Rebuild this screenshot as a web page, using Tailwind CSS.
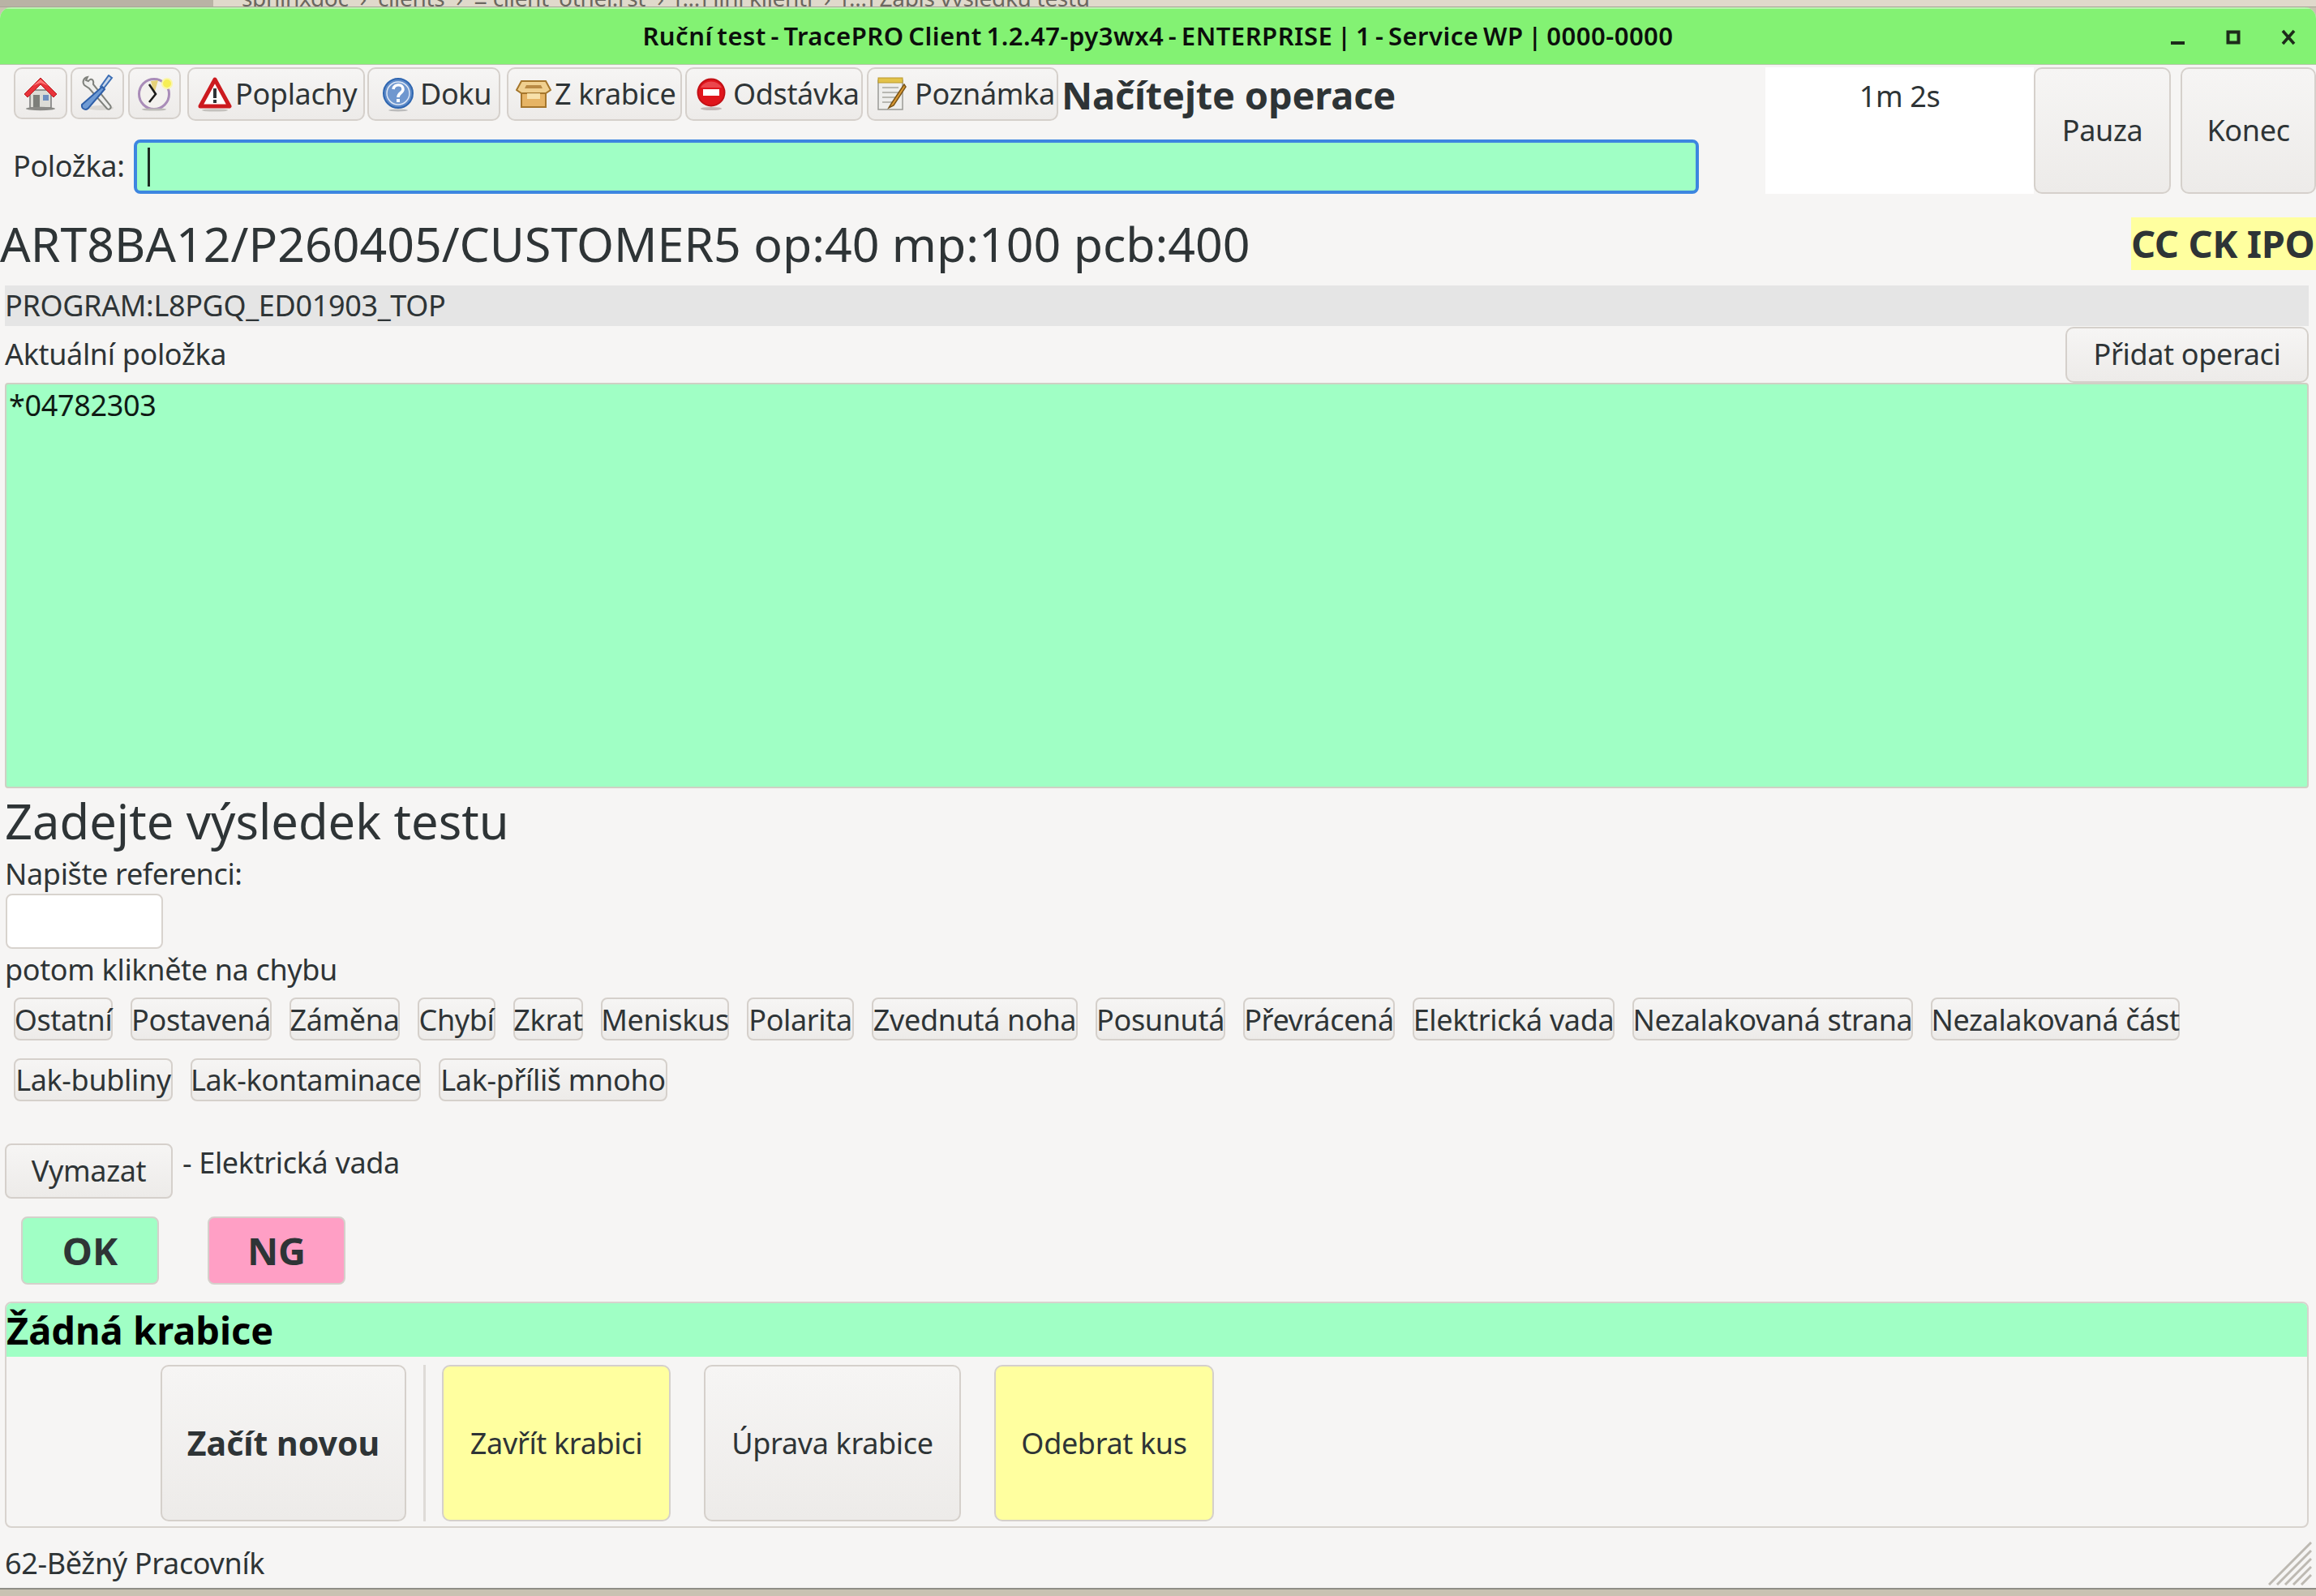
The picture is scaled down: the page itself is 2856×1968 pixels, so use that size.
<!DOCTYPE html>
<html lang="cs">
<head>
<meta charset="utf-8">
<script src="https://cdn.jsdelivr.net/npm/@tailwindcss/browser@4"></script>
<title>Ruční test</title>
</head>
<body class="m-0 p-0">
<div class="relative w-[2856px] h-[1968px] overflow-hidden flex flex-col bg-[#c9c2b2] font-['Noto_Sans',sans-serif] text-[#2e3436] text-[36px] leading-[50px] tracking-[-0.35px]">
  <!-- desktop strip behind the window -->
  <div class="h-[9px] shrink-0 flex overflow-hidden bg-[#e0d9cb] text-[#6b675f] text-[28px] tracking-[-0.3px] border-b border-[#a9a598]">
    <div class="w-[263px] h-full bg-[#b9b3a5] shrink-0"></div>
    <div class="pl-[35px] -mt-[27px] whitespace-pre leading-[48px]">sphinxdoc  ›  clients  ›  ≡ client_other.rst  ›  [...] Jiní klienti  ›  [...] Zápis výsledku testu</div>
  </div>

  <!-- window -->
  <div class="h-[949px] grow flex flex-col bg-[#f6f5f4] rounded-t-[14px] overflow-hidden">
    <!-- title bar -->
    <div class="relative h-[71px] shrink-0 flex items-center justify-center bg-[#83f273] border-t-2 border-[#b9f5ae] border-b border-b-[#b5c9a8] text-[#0c0f0c] font-semibold text-[31px]">
      <span class="pb-[2px] w-[1274px] text-center whitespace-nowrap tracking-[0.5px] [word-spacing:-3px]">Ruční test - TracePRO Client 1.2.47-py3wx4 - ENTERPRISE | 1 - Service WP | 0000-0000</span>
      <div class="absolute right-[25px] top-[25px] flex items-start gap-[50px]">
        <svg width="18" height="20" viewBox="0 0 18 20"><rect x="0" y="15" width="17" height="4" fill="#1d2b1a"/></svg>
        <svg width="18" height="20" viewBox="0 0 18 20"><rect x="2.5" y="3.5" width="13" height="13" fill="none" stroke="#1d2b1a" stroke-width="4"/></svg>
        <svg width="18" height="20" viewBox="0 0 18 20"><path d="M2 2 L16 18 M16 2 L2 18" fill="none" stroke="#1d2b1a" stroke-width="3.6"/></svg>
      </div>
    </div>

    <!-- header: toolbar + input, timer, pause, end -->
    <div class="h-[156px] mt-[3px] shrink-0 flex">
      <div class="w-[2177px] shrink-0 flex flex-col">
        <div class="h-[66px] pl-[17px] flex items-start">
          <button class="w-[66px] h-[64px] mr-[4px] shrink-0 flex items-center justify-center rounded-[10px] border-2 border-[#d5d0cb] bg-linear-to-b from-[#f6f5f4] to-[#edebe9]">
            <svg width="42" height="44" viewBox="0 0 42 44"><rect x="8" y="18" width="26" height="22" fill="#dcdcd6" stroke="#777" stroke-width="1.5"/><rect x="12" y="24" width="8" height="16" fill="#7d7f7a"/><rect x="24" y="24" width="7" height="7" fill="#6f8fc0"/><path d="M1 23 L21 3 L41 23 L37 27 L21 11 L5 27 Z" fill="#e8333a" stroke="#b81f24" stroke-width="1"/><path d="M11 13 L21 5 L31 13 L21 9Z" fill="#f77"/><ellipse cx="21" cy="41" rx="18" ry="2.2" fill="#8a8a86"/></svg>
          </button>
          <button class="w-[66px] h-[64px] mr-[5px] shrink-0 flex items-center justify-center rounded-[10px] border-2 border-[#d5d0cb] bg-linear-to-b from-[#f6f5f4] to-[#edebe9]">
            <svg width="44" height="46" viewBox="0 0 44 46"><ellipse cx="26" cy="41" rx="16" ry="3" fill="#d9d7d3"/><path d="M10 3 C5 4 3 9 6 13 L12 17 L34 42 C37 44 40 41 38 38 L17 12 C18 7 15 3 11 8 L8 7 Z" fill="#eeeeec" stroke="#7f817c" stroke-width="2"/><path d="M40 4 L36 1 L26 15 L29 18 Z" fill="#c8d6ea" stroke="#3c6eb4" stroke-width="2"/><path d="M28 15 L31 18 L12 40 C9 45 2 43 3 37 Z" fill="#6f9bd4" stroke="#2e5fa8" stroke-width="2"/></svg>
          </button>
          <button class="w-[65px] h-[64px] mr-[8px] shrink-0 flex items-center justify-center rounded-[10px] border-2 border-[#d5d0cb] bg-linear-to-b from-[#f6f5f4] to-[#edebe9]">
            <svg width="44" height="44" viewBox="0 0 44 44"><circle cx="21" cy="23" r="18.5" fill="#f3f1ee" stroke="#a98cb8" stroke-width="3"/><path d="M21 23 L17 7 L26 6 Z" fill="#e6d27a"/><path d="M15 11 L23 23 L15 33" fill="none" stroke="#1c1c1c" stroke-width="2.6"/><circle cx="37" cy="10" r="6" fill="#f6ee55" stroke="#fbf6a8" stroke-width="2"/><ellipse cx="21" cy="42" rx="15" ry="1.6" fill="#bdbcb8"/></svg>
          </button>
          <button class="w-[219px] h-[66px] mr-[3px] shrink-0 flex items-center gap-[4px] pl-[11px] rounded-[10px] border-2 border-[#d5d0cb] bg-linear-to-b from-[#f6f5f4] to-[#edebe9]">
            <svg class="shrink-0" width="42" height="44" viewBox="0 0 42 44"><path d="M21 4 L39 37 L3 37 Z" fill="#fff" stroke="#cc1a1f" stroke-width="5" stroke-linejoin="round"/><rect x="19" y="15" width="4" height="12" fill="#2e3436"/><rect x="19" y="29" width="4" height="4" fill="#2e3436"/><ellipse cx="21" cy="42" rx="16" ry="1.6" fill="#c3c1bd"/></svg>
            <span class="whitespace-nowrap">Poplachy</span>
          </button>
          <button class="w-[164px] h-[66px] mr-[8px] shrink-0 flex items-center gap-[7px] pl-[16px] rounded-[10px] border-2 border-[#d5d0cb] bg-linear-to-b from-[#f6f5f4] to-[#edebe9]">
            <svg class="shrink-0" width="40" height="44" viewBox="0 0 40 44"><circle cx="20" cy="21" r="18" fill="#5d8ac8" stroke="#2f66b0" stroke-width="2"/><circle cx="20" cy="21" r="14" fill="#6f97cf" stroke="#dfe8f5" stroke-width="1.5"/><path d="M14 16 C15 9 26 9 26 16 C26 21 20 20 20 26" fill="none" stroke="#fff" stroke-width="3.6"/><rect x="18" y="28" width="4" height="4" fill="#fff"/><ellipse cx="20" cy="42" rx="12" ry="1.4" fill="#bbb"/></svg>
            <span class="whitespace-nowrap">Doku</span>
          </button>
          <button class="w-[216px] h-[66px] mr-[4px] shrink-0 flex items-center gap-[4px] pl-[9px] rounded-[10px] border-2 border-[#d5d0cb] bg-linear-to-b from-[#f6f5f4] to-[#edebe9]">
            <svg class="shrink-0" width="44" height="38" viewBox="0 0 44 38"><path d="M7 16 H37 V35 H7 Z" fill="#e6b465" stroke="#a5762c" stroke-width="2"/><path d="M1 14 L7 3 H37 L43 14 L37 18 H7 Z" fill="#f0d090" stroke="#a5762c" stroke-width="2"/><path d="M13 8 H31 L33 12 H11 Z" fill="#b98a44"/><rect x="14" y="18" width="16" height="7" fill="#fff3c8" opacity=".7"/></svg>
            <span class="whitespace-nowrap">Z krabice</span>
          </button>
          <button class="w-[219px] h-[66px] mr-[5px] shrink-0 flex items-center gap-[9px] pl-[12px] rounded-[10px] border-2 border-[#d5d0cb] bg-linear-to-b from-[#f6f5f4] to-[#edebe9]">
            <svg class="shrink-0" width="36" height="44" viewBox="0 0 36 44"><circle cx="18" cy="20" r="16.5" fill="#e0151c" stroke="#c11016" stroke-width="2"/><path d="M5 14 A15 15 0 0 1 31 14 Z" fill="#f2686c" opacity=".6"/><rect x="8" y="16" width="20" height="8" fill="#fff"/><ellipse cx="18" cy="40" rx="13" ry="2" fill="#c3b9b8"/></svg>
            <span class="whitespace-nowrap">Odstávka</span>
          </button>
          <button class="w-[236px] h-[66px] mr-[4px] shrink-0 flex items-center gap-[10px] pl-[11px] rounded-[10px] border-2 border-[#d5d0cb] bg-linear-to-b from-[#f6f5f4] to-[#edebe9]">
            <svg class="shrink-0" width="36" height="44" viewBox="0 0 36 44"><rect x="1" y="5" width="30" height="36" fill="#eeeeec" stroke="#9b9b96" stroke-width="1.5"/><rect x="1" y="2" width="30" height="6" fill="#e3c34a" stroke="#b9982a" stroke-width="1"/><path d="M6 14 H26 M6 20 H26 M6 26 H22 M6 32 H20" stroke="#b8b8b2" stroke-width="2"/><path d="M33 10 L17 34 L14 39 L20 36 L35 13 Z" fill="#dc9a33" stroke="#7a5518" stroke-width="1.5"/></svg>
            <span class="whitespace-nowrap">Poznámka</span>
          </button>
          <span class="font-bold text-[47px] leading-[68px] tracking-[-0.2px] whitespace-nowrap">Načítejte operace</span>
        </div>
        <div class="h-[67px] mt-[23px] pl-[16px] flex items-center">
          <span class="w-[149px] pb-[2px] shrink-0 whitespace-nowrap">Položka:</span>
          <div class="w-[1930px] h-full flex items-center pl-[13px] bg-[#a0ffc5] rounded-[8px] border-[4px] border-[#3d86e0]">
            <span class="block w-[3px] h-[48px] bg-[#1c2b22]"></span>
          </div>
        </div>
      </div>
      <div class="w-[331px] shrink-0 h-full bg-white text-center pt-[11px]">1m 2s</div>
      <button class="w-[169px] shrink-0 h-full mr-[12px] rounded-[10px] border-2 border-[#d5d0cb] bg-linear-to-b from-[#f6f5f4] to-[#edebe9]">Pauza</button>
      <button class="w-[167px] shrink-0 h-full rounded-[10px] border-2 border-[#d5d0cb] bg-linear-to-b from-[#f6f5f4] to-[#edebe9]">Konec</button>
    </div>

    <!-- order heading -->
    <div class="h-[65px] mt-[29px] shrink-0 flex items-center justify-between">
      <span class="text-[59px] tracking-normal whitespace-nowrap leading-[65px]">ART8BA12/P260405/CUSTOMER5 op:40 mp:100 pcb:400</span>
      <span class="w-[228px] h-full bg-[#ffff9f] font-bold text-[47px] tracking-[-0.4px] leading-[65px] whitespace-nowrap">CC CK IPO</span>
    </div>

    <!-- program -->
    <div class="h-[50px] mt-[19px] ml-[6px] mr-[9px] shrink-0 bg-[#e5e5e5] leading-[50px] whitespace-nowrap">PROGRAM:L8PGQ_ED01903_TOP</div>

    <!-- current item -->
    <div class="h-[69px] mt-[1px] ml-[6px] mr-[9px] shrink-0 flex items-start justify-between">
      <span class="pt-[9px]">Aktuální položka</span>
      <button class="w-[300px] h-[69px] pb-[2px] rounded-[10px] border-2 border-[#d5d0cb] bg-linear-to-b from-[#f6f5f4] to-[#edebe9]">Přidat operaci</button>
    </div>
    <div class="h-[500px] ml-[6px] mr-[9px] shrink-0 bg-[#a0ffc5] border-2 border-[#cfd0c4] rounded-[4px] text-[#0f1a14] pl-[3px] pt-[1px]">*04782303</div>

    <!-- result -->
    <div class="h-[70px] mt-[6px] pl-[6px] shrink-0 text-[59.6px] tracking-normal leading-[68px] whitespace-nowrap">Zadejte výsledek testu</div>
    <div class="h-[50px] mt-[5px] pl-[6px] shrink-0 leading-[50px]">Napište referenci:</div>
    <div class="w-[194px] h-[68px] ml-[7px] -mt-[1px] shrink-0 bg-white rounded-[8px] border-2 border-[#d8d3ce]"></div>
    <div class="h-[50px] mt-[1px] pl-[6px] shrink-0">potom klikněte na chybu</div>

    <div class="mt-[9px] ml-[17px] w-[2700px] shrink-0 flex flex-wrap gap-x-[22px] gap-y-[22px]">
      <button class="w-[122px] h-[53px] pt-[2px] whitespace-nowrap flex items-center justify-center rounded-[8px] border-2 border-[#d5d0cb] bg-linear-to-b from-[#f6f5f4] to-[#edebe9]">Ostatní</button>
      <button class="w-[174px] h-[53px] pt-[2px] whitespace-nowrap flex items-center justify-center rounded-[8px] border-2 border-[#d5d0cb] bg-linear-to-b from-[#f6f5f4] to-[#edebe9]">Postavená</button>
      <button class="w-[136px] h-[53px] pt-[2px] whitespace-nowrap flex items-center justify-center rounded-[8px] border-2 border-[#d5d0cb] bg-linear-to-b from-[#f6f5f4] to-[#edebe9]">Záměna</button>
      <button class="w-[96px] h-[53px] pt-[2px] whitespace-nowrap flex items-center justify-center rounded-[8px] border-2 border-[#d5d0cb] bg-linear-to-b from-[#f6f5f4] to-[#edebe9]">Chybí</button>
      <button class="w-[86px] h-[53px] pt-[2px] whitespace-nowrap flex items-center justify-center rounded-[8px] border-2 border-[#d5d0cb] bg-linear-to-b from-[#f6f5f4] to-[#edebe9]">Zkrat</button>
      <button class="w-[158px] h-[53px] pt-[2px] whitespace-nowrap flex items-center justify-center rounded-[8px] border-2 border-[#d5d0cb] bg-linear-to-b from-[#f6f5f4] to-[#edebe9]">Meniskus</button>
      <button class="w-[132px] h-[53px] pt-[2px] whitespace-nowrap flex items-center justify-center rounded-[8px] border-2 border-[#d5d0cb] bg-linear-to-b from-[#f6f5f4] to-[#edebe9]">Polarita</button>
      <button class="w-[254px] h-[53px] pt-[2px] whitespace-nowrap flex items-center justify-center rounded-[8px] border-2 border-[#d5d0cb] bg-linear-to-b from-[#f6f5f4] to-[#edebe9]">Zvednutá noha</button>
      <button class="w-[160px] h-[53px] pt-[2px] whitespace-nowrap flex items-center justify-center rounded-[8px] border-2 border-[#d5d0cb] bg-linear-to-b from-[#f6f5f4] to-[#edebe9]">Posunutá</button>
      <button class="w-[187px] h-[53px] pt-[2px] whitespace-nowrap flex items-center justify-center rounded-[8px] border-2 border-[#d5d0cb] bg-linear-to-b from-[#f6f5f4] to-[#edebe9]">Převrácená</button>
      <button class="w-[249px] h-[53px] pt-[2px] whitespace-nowrap flex items-center justify-center rounded-[8px] border-2 border-[#d5d0cb] bg-linear-to-b from-[#f6f5f4] to-[#edebe9]">Elektrická vada</button>
      <button class="w-[346px] h-[53px] pt-[2px] whitespace-nowrap flex items-center justify-center rounded-[8px] border-2 border-[#d5d0cb] bg-linear-to-b from-[#f6f5f4] to-[#edebe9]">Nezalakovaná strana</button>
      <button class="w-[307px] h-[53px] pt-[2px] whitespace-nowrap flex items-center justify-center rounded-[8px] border-2 border-[#d5d0cb] bg-linear-to-b from-[#f6f5f4] to-[#edebe9]">Nezalakovaná část</button>
      <button class="w-[196px] h-[53px] whitespace-nowrap flex items-center justify-center rounded-[8px] border-2 border-[#d5d0cb] bg-linear-to-b from-[#f6f5f4] to-[#edebe9]">Lak-bubliny</button>
      <button class="w-[284px] h-[53px] whitespace-nowrap flex items-center justify-center rounded-[8px] border-2 border-[#d5d0cb] bg-linear-to-b from-[#f6f5f4] to-[#edebe9]">Lak-kontaminace</button>
      <button class="w-[282px] h-[53px] whitespace-nowrap flex items-center justify-center rounded-[8px] border-2 border-[#d5d0cb] bg-linear-to-b from-[#f6f5f4] to-[#edebe9]">Lak-příliš mnoho</button>
    </div>

    <div class="mt-[52px] ml-[6px] h-[68px] shrink-0 flex items-start gap-[12px]">
      <button class="w-[207px] h-[68px] rounded-[8px] border-2 border-[#d5d0cb] bg-linear-to-b from-[#f6f5f4] to-[#edebe9]">Vymazat</button>
      <span class="leading-[48px]">- Elektrická vada</span>
    </div>

    <div class="mt-[22px] ml-[26px] shrink-0 flex gap-[60px]">
      <button class="w-[170px] h-[84px] rounded-[8px] border-2 border-[#d5d0cb] bg-[#a0ffc5] font-bold text-[47px] tracking-normal">OK</button>
      <button class="w-[170px] h-[84px] rounded-[8px] border-2 border-[#d5d0cb] bg-[#ff9fc5] font-bold text-[47px] tracking-normal">NG</button>
    </div>

    <!-- box panel -->
    <div class="h-[279px] mt-[21px] ml-[6px] mr-[9px] shrink-0 rounded-[8px] border-2 border-[#d8d3ce] overflow-hidden flex flex-col">
      <div class="h-[66px] shrink-0 bg-[#a0ffc5] text-black font-bold text-[47px] tracking-normal leading-[66px] whitespace-nowrap">Žádná krabice</div>
      <div class="mt-[10px] pl-[190px] flex">
        <button class="w-[303px] h-[193px] pb-[2px] shrink-0 rounded-[10px] border-2 border-[#d5d0cb] bg-linear-to-b from-[#f6f5f4] to-[#edebe9] font-bold text-[41px] tracking-normal">Začít novou</button>
        <div class="w-[3px] h-[193px] ml-[21px] mr-[20px] shrink-0 bg-[#dedbd7]"></div>
        <button class="w-[282px] h-[193px] shrink-0 rounded-[10px] border-2 border-[#d5d0cb] bg-[#ffff9f]">Zavřít krabici</button>
        <button class="w-[317px] h-[193px] ml-[41px] shrink-0 rounded-[10px] border-2 border-[#d5d0cb] bg-linear-to-b from-[#f6f5f4] to-[#edebe9]">Úprava krabice</button>
        <button class="w-[271px] h-[193px] ml-[41px] shrink-0 rounded-[10px] border-2 border-[#d5d0cb] bg-[#ffff9f]">Odebrat kus</button>
      </div>
    </div>

    <!-- status bar -->
    <div class="relative grow flex items-center pl-[6px] pt-[14px] whitespace-nowrap">
      62-Běžný Pracovník
      <svg class="absolute right-[5px] bottom-[3px]" width="54" height="54" viewBox="0 0 54 54"><path d="M1 53 L53 1 M11 53 L53 11 M21 53 L53 21 M31 53 L53 31 M41 53 L53 41" stroke="#bdb9b2" stroke-width="3" fill="none"/></svg>
    </div>
  </div>
  <!-- desktop strip under the window -->
  <div class="h-[10px] shrink-0 border-t-2 border-[#8f8e86] bg-[#c9c2b2]"></div>
</div>
</body>
</html>
